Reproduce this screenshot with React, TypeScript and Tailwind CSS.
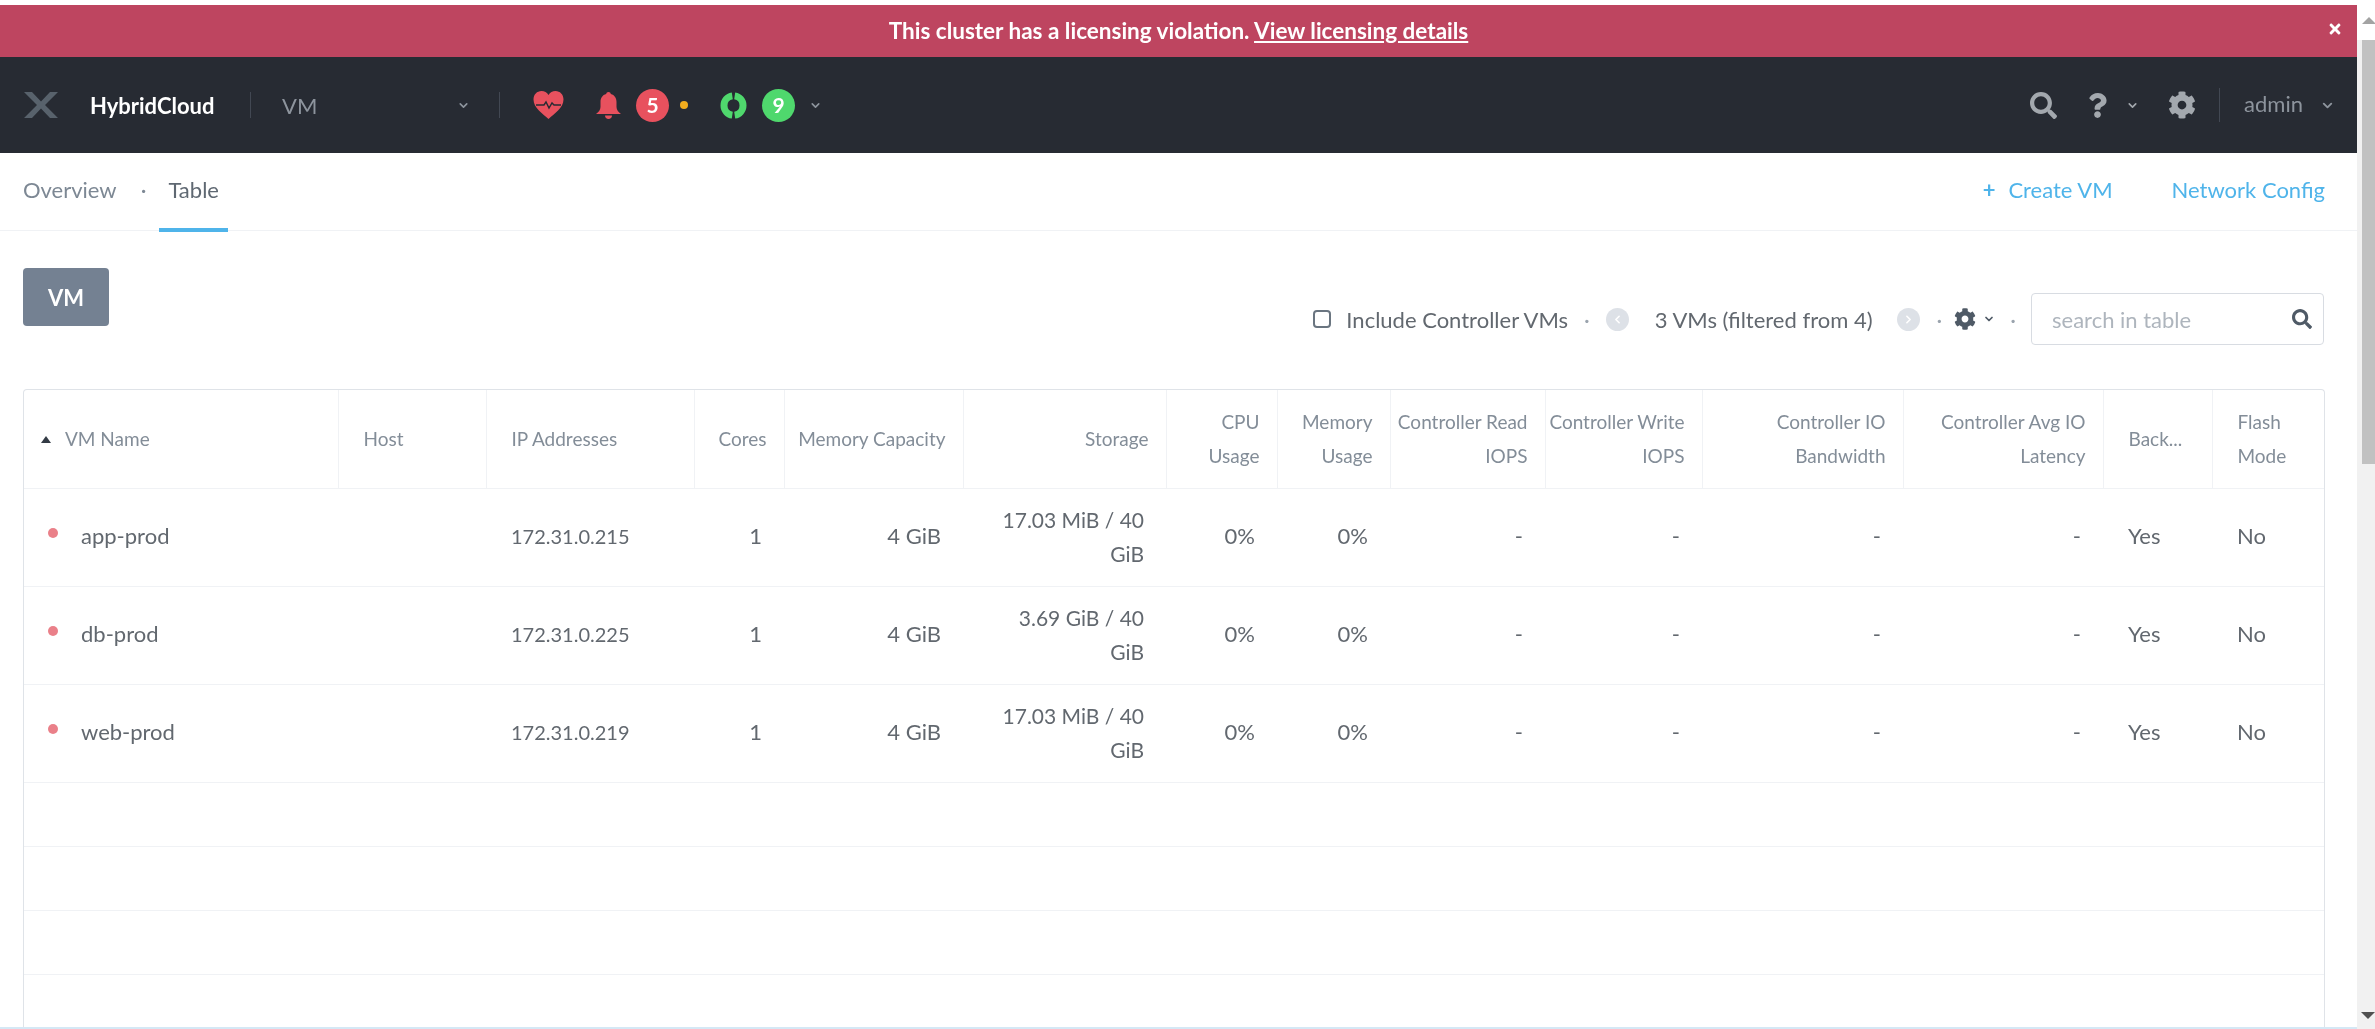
import React from 'react'
import { ChevronDown, ChevronLeft, ChevronRight } from 'lucide-react'
import { FaCog, FaQuestion, FaSearch, FaTimes } from 'react-icons/fa'

const vms = [
  { name: 'app-prod', ip: '172.31.0.215', storage: '17.03 MiB / 40 GiB' },
  { name: 'db-prod', ip: '172.31.0.225', storage: '3.69 GiB / 40 GiB' },
  { name: 'web-prod', ip: '172.31.0.219', storage: '17.03 MiB / 40 GiB' },
]

const widths = [314, 148, 208, 90, 179, 203, 111, 113, 155, 157, 201, 200, 109, 113]

const thBase = 'border-r border-b border-[#f0f2f5] font-normal text-[19px] text-[#838d98] align-middle leading-[34px] last:border-r-0'
const thRight = `${thBase} text-right pr-[17px]`
const thLeft = `${thBase} text-left pl-[25px]`
const tdRight = 'text-right pr-[22px] pl-1 pb-[3px]'
const tdLeft = 'text-left pl-[25px] pb-[3px]'

const Dot = () => <span className="mx-[16px] text-[#9aa3ad]">·</span>

const App = () => {
  return (
    <div className="flex h-screen overflow-hidden bg-white font-['Lato',sans-serif] text-[22px] text-[#62686f] blur-[0.5px]">
      <div className="flex min-w-0 flex-1 flex-col pt-[5px]">
        <div className="relative flex h-[52px] shrink-0 items-center justify-center bg-[#be4560] text-[22.5px] font-bold text-white">
          <span>
            This cluster has a licensing violation. <span className="underline">View licensing details</span>
          </span>
          <FaTimes size={16} className="absolute right-[14px] top-[16px]" />
        </div>

        <header className="flex h-[96px] shrink-0 items-center justify-between bg-[#272b33] pl-[23px] pr-[22px]">
          <div className="flex items-center">
            <svg viewBox="0 0 36 26" className="h-[26px] w-[36px]">
              <path d="M1 0h8l9 9.5L27 0h8L22 13l13 13h-8l-9-9.5L9 26H1l13-13z" fill="#58626c" />
            </svg>
            <span className="ml-[31px] w-[127px] font-bold text-white">HybridCloud</span>
            <span className="ml-[33px] h-[26px] w-px bg-[#424853]" />
            <span className="ml-[31px] w-[175px] text-[#8d949d]">VM</span>
            <ChevronDown size={13} strokeWidth={3} className="text-[#8d949d]" />
            <span className="ml-[29px] h-[26px] w-px bg-[#424853]" />
            <svg viewBox="0 0 31 28" className="ml-[33px] h-[28px] w-[31px]">
              <path
                d="M15.5 28C10 23 .5 17 .5 8.5 .5 3.5 4 0 8.5 0c3 0 5.5 1.5 7 4 1.5-2.5 4-4 7-4 4.5 0 8 3.5 8 8.5 0 8.5-9.5 14.5-15 19.5z"
                fill="#e8515e"
              />
              <path d="M3 14h8l2-3 3 6 3-5 2 2h7" fill="none" stroke="#272b33" strokeWidth="1.4" />
            </svg>
            <svg viewBox="0 0 29 27" className="ml-[30px] h-[27px] w-[29px]">
              <path
                d="M14.5 0c1.3 0 2.2.9 2.3 2 3.8 1 5.7 4 5.7 8v5c0 3 2 5 4.5 7H2c2.5-2 4.5-4 4.5-7v-5c0-4 1.9-7 5.7-8 .1-1.1 1-2 2.3-2zM11 23.5h7c0 2-1.5 3.5-3.5 3.5S11 25.5 11 23.5z"
                fill="#e8515e"
              />
            </svg>
            <span className="ml-[13px] flex h-[33px] w-[33px] items-center justify-center rounded-full bg-[#e8515e] text-[21px] font-bold text-white">
              5
            </span>
            <span className="ml-[11px] h-[8px] w-[8px] rounded-full bg-[#f2ad1e]" />
            <svg viewBox="0 0 27 27" className="ml-[32px] h-[27px] w-[27px]" fill="none" stroke="#4fd86d" strokeWidth="7">
              <path d="M12.3 3.9A9.7 9.7 0 0 0 12.3 23.1" />
              <path d="M14.7 3.9A9.7 9.7 0 0 1 14.7 23.1" />
            </svg>
            <span className="ml-[15px] flex h-[33px] w-[33px] items-center justify-center rounded-full bg-[#4fd86d] text-[21px] font-bold text-white">
              9
            </span>
            <ChevronDown size={13} strokeWidth={3} className="ml-[14px] text-[#8d949d]" />
          </div>
          <div className="flex items-center text-[#a3a8ae]">
            <FaSearch size={27} />
            <FaQuestion size={25} className="ml-[28px]" />
            <ChevronDown size={13} strokeWidth={3} className="ml-[16px]" />
            <FaCog size={28} className="ml-[29px]" />
            <span className="ml-[23px] h-[34px] w-px bg-[#424853]" />
            <span className="ml-[24px] pb-[3px] text-[#8d949d]">admin</span>
            <ChevronDown size={15} strokeWidth={3} className="ml-[17px] text-[#8d949d]" />
          </div>
        </header>

        <nav className="flex h-[78px] shrink-0 items-center justify-between border-b border-[#f0f2f5] pl-[23px] pr-[32px]">
          <div className="flex h-full items-center pb-[5px]">
            <span className="text-[#7d8894]">Overview</span>
            <span className="ml-[24px] mr-[22px] text-[#7d8894]">·</span>
            <span className="relative text-[#5f6872]">
              Table
              <span className="absolute -bottom-[26px] -left-[9px] -right-[9px] h-[4px] bg-[#4fb4ea]" />
            </span>
          </div>
          <div className="flex items-center pb-[5px] text-[#4fb4ea]">
            <span className="mr-[13px] font-bold">+</span>
            <span>Create VM</span>
            <span className="ml-[59px]">Network Config</span>
          </div>
        </nav>

        <div className="flex h-[158px] shrink-0 pl-[23px] pr-[33px]">
          <div className="mt-[37px] flex h-[58px] w-[86px] items-center justify-center rounded bg-[#748192] font-bold text-white">
            VM
          </div>
          <div className="mt-[62px] ml-auto flex h-[52px] items-center">
            <span className="h-[18px] w-[18px] rounded-[4px] border-2 border-[#6a7580]" />
            <span className="ml-[15px]">Include Controller VMs</span>
            <Dot />
            <span className="flex h-[23px] w-[23px] items-center justify-center rounded-full bg-[#dde1e7]">
              <ChevronLeft size={13} strokeWidth={3} className="text-white" />
            </span>
            <span className="ml-[26px]">3 VMs (filtered from 4)</span>
            <span className="ml-[24px] flex h-[23px] w-[23px] items-center justify-center rounded-full bg-[#dde1e7]">
              <ChevronRight size={13} strokeWidth={3} className="text-white" />
            </span>
            <span className="ml-[17px] mr-[12px] text-[#9aa3ad]">·</span>
            <FaCog size={22} className="text-[#4f5a66]" />
            <ChevronDown size={12} strokeWidth={3.5} className="ml-[7px] text-[#4f5a66]" />
            <span className="ml-[15px] mr-[15px] text-[#9aa3ad]">·</span>
            <div className="flex h-[52px] w-[293px] items-center justify-between rounded border border-[#d8dce2] pl-[20px] pr-[11px]">
              <span className="text-[#aeb5bd]">search in table</span>
              <FaSearch size={20} className="text-[#4f5a66]" />
            </div>
          </div>
        </div>

        <div className="mx-[23px] mr-[32px] min-h-0 flex-1 overflow-hidden rounded-t border-x border-t border-[#dfe3e8]">
          <table className="w-full table-fixed">
            <colgroup>
              {widths.map((w, i) => (
                <col key={i} style={{ width: w }} />
              ))}
            </colgroup>
            <thead>
              <tr className="h-[98px]">
                <th className={`${thBase} pl-[17px] text-left`}>
                  <span className="mr-[14px] inline-block h-0 w-0 -translate-y-[3px] border-x-[5px] border-b-[7px] border-x-transparent border-b-[#333b45]" />
                  VM Name
                </th>
                <th className={thLeft}>Host</th>
                <th className={thLeft}>IP Addresses</th>
                <th className={thRight}>Cores</th>
                <th className={thRight}>Memory Capacity</th>
                <th className={thRight}>Storage</th>
                <th className={thRight}>CPU Usage</th>
                <th className={thRight}>Memory Usage</th>
                <th className={thRight}>Controller Read IOPS</th>
                <th className={thRight}>Controller Write IOPS</th>
                <th className={thRight}>Controller IO Bandwidth</th>
                <th className={thRight}>Controller Avg IO Latency</th>
                <th className={thLeft}>Back...</th>
                <th className={thLeft}>Flash Mode</th>
              </tr>
            </thead>
            <tbody>
              {vms.map((vm) => (
                <tr key={vm.name} className="h-[98px] border-b border-[#f0f2f5]">
                  <td className="pl-[24px] pb-[3px]">
                    <span className="inline-block h-[10px] w-[10px] -translate-y-[6px] rounded-full bg-[#ea8089]" />
                    <span className="ml-[23px]">{vm.name}</span>
                  </td>
                  <td />
                  <td className={`${tdLeft} text-[20px]`}>{vm.ip}</td>
                  <td className={tdRight}>1</td>
                  <td className={tdRight}>4 GiB</td>
                  <td className="pl-[24px] pr-[22px] text-right text-[21px] leading-[34px]">{vm.storage}</td>
                  <td className={tdRight}>0%</td>
                  <td className={tdRight}>0%</td>
                  <td className={tdRight}>-</td>
                  <td className={tdRight}>-</td>
                  <td className={tdRight}>-</td>
                  <td className={tdRight}>-</td>
                  <td className={tdLeft}>Yes</td>
                  <td className={tdLeft}>No</td>
                </tr>
              ))}
              {[0, 1, 2, 3].map((i) => (
                <tr key={i} className="h-[64px] border-b border-[#f0f2f5]">
                  <td colSpan={14} />
                </tr>
              ))}
            </tbody>
          </table>
        </div>
        <div className="h-[2px] shrink-0 bg-[#d5e8f5]" />
      </div>

      <div className="flex w-[18px] shrink-0 flex-col items-end bg-[#f1f1f1]">
        <div className="flex h-[40px] w-full items-center justify-center bg-white pl-[5px]">
          <span className="h-0 w-0 border-x-[7px] border-b-[7px] border-x-transparent border-b-[#a3a3a3]" />
        </div>
        <div className="h-[424px] w-[13px] bg-[#c1c1c1]" />
        <div className="mt-auto mb-[10px] h-0 w-0 border-x-[7px] border-t-[7px] border-x-transparent border-t-[#505050]" />
      </div>
    </div>
  )
}

export default App
